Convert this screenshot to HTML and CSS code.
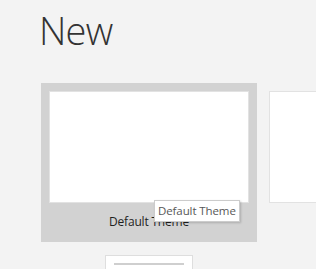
FILE: index.html
```html
<!DOCTYPE html>
<html lang="en">
<head>
    <meta charset="UTF-8">
    <title>New</title>
    <link rel="stylesheet" href="styles.css">
</head>
<body>
    <div class="page">
        <h1>New</h1>

        <div class="templates">
            <div class="template selected">
                <div class="thumb"></div>
                <div class="label">Default Theme</div>
                <div class="tooltip">Default Theme</div>
            </div>
            <div class="template">
                <div class="thumb"></div>
                <div class="label"></div>
            </div>
        </div>

        <div class="more">
            <div class="mini">
                <div class="rule"></div>
            </div>
        </div>
    </div>
</body>
</html>
```

FILE: styles.css
```css
html, body {
    margin: 0;
    background: #f3f3f3;
    overflow: hidden;
}

.page {
    padding-left: 41px;
    width: 275px;
    overflow: hidden;
    font-family: "Open Sans", "Noto Sans", sans-serif;
}

h1 {
    margin: 0 0 26px -2px;
    padding-top: 3px;
    font-size: 38px;
    line-height: 54px;
    font-weight: 300;
    color: #333;
    letter-spacing: -0.8px;
}

.templates {
    display: flex;
    gap: 4px;
}

.template {
    position: relative;
    flex: none;
    width: 216px;
    height: 159px;
    padding: 8px;
    box-sizing: border-box;
}

.template.selected {
    background: #d2d2d2;
}

.thumb {
    width: 200px;
    height: 112px;
    box-sizing: border-box;
    background: #fff;
    border: 1px solid #e2e2e2;
}

.label {
    padding-top: 11px;
    font-size: 12px;
    line-height: 16px;
    letter-spacing: -0.2px;
    color: #1f1f1f;
    text-align: center;
}

.tooltip {
    position: absolute;
    left: 113px;
    top: 117px;
    height: 22px;
    box-sizing: border-box;
    padding: 0 3px;
    background: #fff;
    border: 1px solid #cccccc;
    box-shadow: 1px 1px 2px rgba(0, 0, 0, 0.18);
    font-size: 11.5px;
    line-height: 20px;
    letter-spacing: -0.1px;
    color: #575757;
    white-space: nowrap;
}

.more {
    padding: 13px 0 0 64px;
}

.mini {
    width: 88px;
    height: 20px;
    box-sizing: border-box;
    padding: 7px 8px 0;
    background: #fff;
    border: 1px solid #dedede;
    border-bottom: none;
}

.rule {
    height: 2px;
    background: #cfcfcf;
}
```
